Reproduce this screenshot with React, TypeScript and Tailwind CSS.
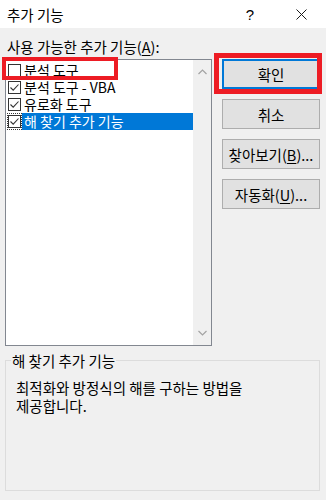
import React from 'react'

const items = [
  { label: '분석 도구', checked: false, selected: false },
  { label: '분석 도구 - VBA', checked: true, selected: false },
  { label: '유로화 도구', checked: true, selected: false },
  { label: '해 찾기 추가 기능', checked: true, selected: true },
]

function CheckBox({ checked }: { checked: boolean }) {
  return (
    <span className="w-[13px] h-[13px] border border-[#333333] bg-white flex items-center justify-center shrink-0">
      {checked && (
        <svg width="11" height="11" viewBox="0 0 11 11">
          <path d="M1.5 5.5 L4.2 8.2 L9.5 2.5" fill="none" stroke="#333333" strokeWidth="1.1" />
        </svg>
      )}
    </span>
  )
}

function DlgButton({ children, primary }: { children: React.ReactNode; primary?: boolean }) {
  return (
    <button
      className={`w-[98px] h-[30px] bg-[#e1e1e1] text-[14.5px] text-black flex items-center justify-center ${
        primary ? 'border-2 border-[#0078d7]' : 'border border-[#adadad]'
      }`}
    >
      {children}
    </button>
  )
}

export default function App() {
  return (
    <div className="w-[326px] h-[500px] bg-[#f0f0f0] relative overflow-hidden font-['Noto_Sans_CJK_KR','Noto_Sans',sans-serif] text-[14.5px] leading-[17px] text-black">
      {/* title bar */}
      <div className="h-[28px] bg-white flex items-center">
        <span className="ml-[7px]">추가 기능</span>
        <span className="ml-auto w-[12px] text-center text-[15px] font-['Liberation_Sans',sans-serif]">?</span>
        <span className="ml-[40px] mr-[19px] flex items-center">
          <svg width="11" height="11" viewBox="0 0 11 11">
            <path d="M0.5 0.5 L10.5 10.5 M10.5 0.5 L0.5 10.5" stroke="#1a1a1a" strokeWidth="1" />
          </svg>
        </span>
      </div>

      {/* list label */}
      <div className="mt-[10px] ml-[7px] h-[16px] flex items-center">
        <span>
          사용 가능한 추가 기능(<span className="underline underline-offset-2">A</span>):
        </span>
      </div>

      <div className="flex mt-[5px] ml-[5px]">
        {/* list box */}
        <div className="w-[207px] h-[287px] bg-white border border-[#828790] flex">
          <div className="flex-1 pt-[2px]">
            {items.map((it) => (
              <div key={it.label} className="h-[17px] flex items-center">
                <span
                  className={`ml-[1px] h-[17px] flex items-center pl-[1px] pr-[1px] ${
                    it.selected ? 'outline outline-1 outline-dotted outline-[#333333] -outline-offset-1' : ''
                  }`}
                >
                  <CheckBox checked={it.checked} />
                </span>
                <span
                  className={`h-[17px] flex items-center pl-[2px] whitespace-nowrap text-[14px] leading-[15px] ${
                    it.selected ? 'bg-[#0078d7] text-white flex-1' : ''
                  }`}
                >
                  {it.label}
                </span>
              </div>
            ))}
          </div>
          {/* scrollbar */}
          <div className="w-[18px] bg-[#f0f0f0] flex flex-col items-center justify-between py-[9px]">
            <svg width="9" height="6" viewBox="0 0 9 6">
              <path d="M0.5 5 L4.5 1 L8.5 5" fill="none" stroke="#a3a3a3" strokeWidth="1.2" />
            </svg>
            <svg width="9" height="6" viewBox="0 0 9 6">
              <path d="M0.5 1 L4.5 5 L8.5 1" fill="none" stroke="#a3a3a3" strokeWidth="1.2" />
            </svg>
          </div>
        </div>

        {/* buttons */}
        <div className="ml-[10px] flex flex-col gap-[10px]">
          <DlgButton primary>확인</DlgButton>
          <DlgButton>취소</DlgButton>
          <DlgButton>
            찾아보기(<span className="underline underline-offset-2">B</span>)...
          </DlgButton>
          <DlgButton>
            자동화(<span className="underline underline-offset-2">U</span>)...
          </DlgButton>
        </div>
      </div>

      {/* group box */}
      <div className="mt-[14px] ml-[5px] w-[315px] h-[131px] border border-[#dcdcdc]">
        <span className="block w-fit -mt-[9px] ml-[5px] px-[1px] bg-[#f0f0f0]">해 찾기 추가 기능</span>
        <p className="mt-[10px] ml-[10px] leading-[18px]">
          최적화와 방정식의 해를 구하는 방법을
          <br />
          제공합니다.
        </p>
      </div>

      {/* red annotation boxes */}
      <div className="absolute left-[2px] top-[57px] w-[116px] h-[23px] border-4 border-[#ed1c24]" />
      <div className="absolute left-[214px] top-[53px] w-[108px] h-[41px] border-[5px] border-[#ed1c24]" />
    </div>
  )
}
